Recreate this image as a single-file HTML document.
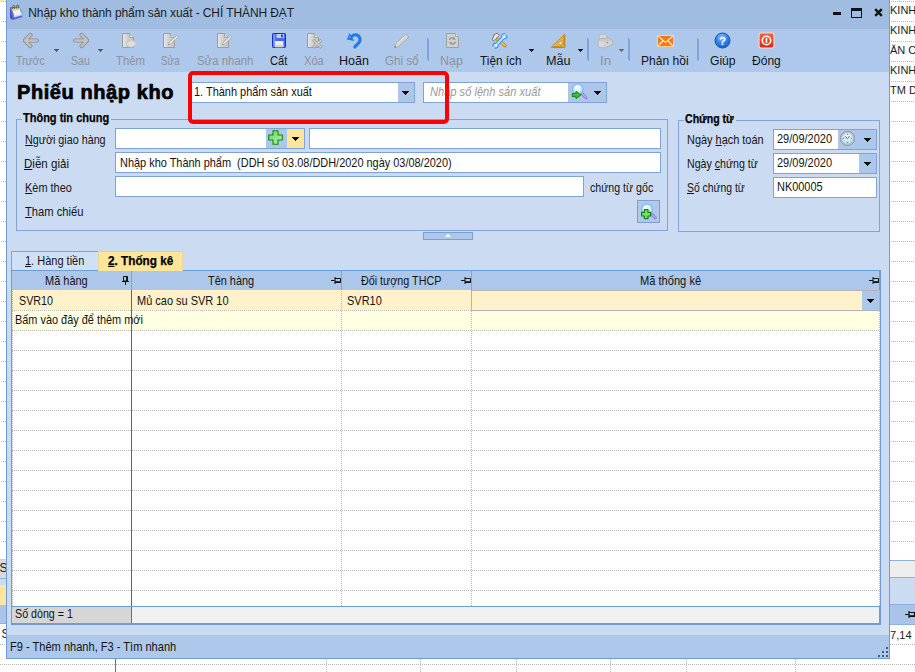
<!DOCTYPE html>
<html lang="vi"><head><meta charset="utf-8"><title>Nhập kho thành phẩm sản xuất</title>
<style>
html,body{margin:0;padding:0;}
body{width:915px;height:672px;position:relative;overflow:hidden;background:#fff;font-family:"Liberation Sans",sans-serif;}
div,span,svg{position:absolute;box-sizing:border-box;}
.t{white-space:pre;text-decoration:none;}
.t u{text-decoration:underline;text-underline-offset:1px;text-decoration-thickness:1px;}
.hd{height:1px;background:repeating-linear-gradient(90deg,#b9b9b9 0 1px,transparent 1px 2px);}
.vd{width:1px;background:repeating-linear-gradient(180deg,transparent 0 1px,#b9b9b9 1px 2px);}
.inp{background:#fff;border:1px solid #7fa3d6;}
.btn{background:#acc7e9;}
.arr{width:0;height:0;border-left:3.5px solid transparent;border-right:3.5px solid transparent;border-top:4px solid #0a0a0a;}
.sarr{width:0;height:0;border-left:3px solid transparent;border-right:3px solid transparent;border-top:3px solid #555;}
.sep{width:2px;background:linear-gradient(90deg,#86a9da 0 1px,#c4d7f0 1px 2px);}
.bgt{font-size:11px;line-height:14px;color:#1c1c1c;white-space:pre;}

</style></head><body>
<div class="hd" style="left:1px;top:1px;width:5px"></div>
<div class="hd" style="left:891px;top:1px;width:24px"></div>
<div class="hd" style="left:1px;top:21px;width:5px"></div>
<div class="hd" style="left:891px;top:21px;width:24px"></div>
<div class="hd" style="left:1px;top:41px;width:5px"></div>
<div class="hd" style="left:891px;top:41px;width:24px"></div>
<div class="hd" style="left:1px;top:61px;width:5px"></div>
<div class="hd" style="left:891px;top:61px;width:24px"></div>
<div class="hd" style="left:1px;top:81px;width:5px"></div>
<div class="hd" style="left:891px;top:81px;width:24px"></div>
<div class="hd" style="left:1px;top:101px;width:5px"></div>
<div class="hd" style="left:891px;top:101px;width:24px"></div>
<div class="hd" style="left:1px;top:121px;width:5px"></div>
<div class="hd" style="left:891px;top:121px;width:24px"></div>
<div class="hd" style="left:1px;top:141px;width:5px"></div>
<div class="hd" style="left:891px;top:141px;width:24px"></div>
<div class="hd" style="left:1px;top:161px;width:5px"></div>
<div class="hd" style="left:891px;top:161px;width:24px"></div>
<div class="hd" style="left:1px;top:181px;width:5px"></div>
<div class="hd" style="left:891px;top:181px;width:24px"></div>
<div class="hd" style="left:1px;top:201px;width:5px"></div>
<div class="hd" style="left:891px;top:201px;width:24px"></div>
<div class="hd" style="left:1px;top:221px;width:5px"></div>
<div class="hd" style="left:891px;top:221px;width:24px"></div>
<div class="hd" style="left:1px;top:241px;width:5px"></div>
<div class="hd" style="left:891px;top:241px;width:24px"></div>
<div class="hd" style="left:1px;top:261px;width:5px"></div>
<div class="hd" style="left:891px;top:261px;width:24px"></div>
<div class="hd" style="left:1px;top:281px;width:5px"></div>
<div class="hd" style="left:891px;top:281px;width:24px"></div>
<div class="hd" style="left:1px;top:301px;width:5px"></div>
<div class="hd" style="left:891px;top:301px;width:24px"></div>
<div class="hd" style="left:1px;top:321px;width:5px"></div>
<div class="hd" style="left:891px;top:321px;width:24px"></div>
<div class="hd" style="left:1px;top:341px;width:5px"></div>
<div class="hd" style="left:891px;top:341px;width:24px"></div>
<div class="hd" style="left:1px;top:361px;width:5px"></div>
<div class="hd" style="left:891px;top:361px;width:24px"></div>
<div class="hd" style="left:1px;top:381px;width:5px"></div>
<div class="hd" style="left:891px;top:381px;width:24px"></div>
<div class="hd" style="left:1px;top:401px;width:5px"></div>
<div class="hd" style="left:891px;top:401px;width:24px"></div>
<div class="hd" style="left:1px;top:421px;width:5px"></div>
<div class="hd" style="left:891px;top:421px;width:24px"></div>
<div class="hd" style="left:1px;top:441px;width:5px"></div>
<div class="hd" style="left:891px;top:441px;width:24px"></div>
<div class="hd" style="left:1px;top:461px;width:5px"></div>
<div class="hd" style="left:891px;top:461px;width:24px"></div>
<div class="hd" style="left:1px;top:481px;width:5px"></div>
<div class="hd" style="left:891px;top:481px;width:24px"></div>
<div class="hd" style="left:1px;top:501px;width:5px"></div>
<div class="hd" style="left:891px;top:501px;width:24px"></div>
<div class="hd" style="left:1px;top:521px;width:5px"></div>
<div class="hd" style="left:891px;top:521px;width:24px"></div>
<div class="hd" style="left:1px;top:541px;width:5px"></div>
<div class="hd" style="left:891px;top:541px;width:24px"></div>
<div style="left:0;top:0;width:5px;height:1px;background:#ffe9a6"></div>
<span class="bgt" style="left:890px;top:3px">KINH</span>
<span class="bgt" style="left:890px;top:23px">KINH</span>
<span class="bgt" style="left:890px;top:43px">ĂN C</span>
<span class="bgt" style="left:890px;top:63px">KINH</span>
<span class="bgt" style="left:890px;top:83px">TM D</span>
<div style="left:0;top:559px;width:6px;height:1px;background:#c5d3e6"></div>
<div style="left:0;top:560px;width:6px;height:18px;background:#dadada"></div>
<span class="bgt" style="left:-0.5px;top:561px;font-size:12px">S</span>
<div style="left:0;top:578px;width:6px;height:1px;background:#8db0de"></div>
<div style="left:0;top:579px;width:6px;height:6px;background:#cbdcf2"></div>
<div style="left:0;top:585px;width:6px;height:20px;background:#ffe69c"></div>
<div style="left:0;top:605px;width:6px;height:18px;background:#a9c4e8"></div>
<div style="left:0;top:623px;width:6px;height:1px;background:#8db0de"></div>
<span class="bgt" style="left:1.5px;top:627px;font-size:12px">S</span>
<div style="left:890px;top:560px;width:25px;height:1px;background:#8db0de"></div>
<div style="left:890px;top:561px;width:25px;height:16px;background:#eeeeee"></div>
<div style="left:890px;top:577px;width:25px;height:1px;background:#8db0de"></div>
<div style="left:890px;top:578px;width:25px;height:26px;background:#cbdcf2"></div>
<div style="left:890px;top:604px;width:25px;height:1px;background:#8db0de"></div>
<div style="left:890px;top:605px;width:25px;height:19px;background:#a9c4e8"></div>
<div style="left:890px;top:624px;width:25px;height:1px;background:#8db0de"></div>
<span class="bgt" style="left:884px;top:628px">57,14</span>
<svg style="left:905px;top:611px" width="10" height="8" viewBox="0 0 10 8"><path d="M0 3.5H4M4 0V7M4 1.5H9.5V5.5H4" fill="none" stroke="#111" stroke-width="1.2"/><path d="M4 5H9.5" stroke="#111" stroke-width="1.6"/></svg>
<div class="hd" style="left:0;top:644px;width:915px"></div>
<div class="hd" style="left:0;top:664px;width:915px"></div>
<div style="left:115px;top:655px;width:1px;height:17px;background:#6e6e6e"></div>
<div class="vd" style="left:326px;top:658px;height:14px"></div>
<div class="vd" style="left:420px;top:658px;height:14px"></div>
<div class="vd" style="left:516px;top:658px;height:14px"></div>
<div class="vd" style="left:610px;top:658px;height:14px"></div>
<div class="vd" style="left:686px;top:658px;height:14px"></div>
<div class="vd" style="left:795px;top:658px;height:14px"></div><div style="left:6px;top:0px;width:884px;height:659px;background:#6f9cd6;"></div>
<div style="left:7px;top:0px;width:882px;height:29px;background:#a0bde1;"></div>
<div style="left:7px;top:29px;width:882px;height:43px;background:#adc8ea;"></div>
<div style="left:7px;top:72px;width:882px;height:553px;background:#cbdcf2;"></div>
<div style="left:7px;top:625px;width:882px;height:10px;background:#cbdcf2;"></div>
<div style="left:7px;top:635px;width:882px;height:23px;background:#adc8ea;"></div>
<div style="left:833px;top:12px;width:8px;height:2.6px;background:#111;"></div>
<div style="left:851px;top:8px;width:11.4px;height:10.4px;border:1.2px solid #111;border-top-width:3px;"></div>
<svg style="left:874px;top:8px" width="9" height="9" viewBox="0 0 9 9"><path d="M1.2 1.2L7.8 7.8M7.8 1.2L1.2 7.8" stroke="#111" stroke-width="2.4"/></svg>
<div style="left:886px;top:647px;width:2px;height:2px;background:#455d80;"></div>
<div style="left:882px;top:651px;width:2px;height:2px;background:#455d80;"></div>
<div style="left:886px;top:651px;width:2px;height:2px;background:#455d80;"></div>
<div style="left:878px;top:655px;width:2px;height:2px;background:#455d80;"></div>
<div style="left:882px;top:655px;width:2px;height:2px;background:#455d80;"></div>
<div style="left:886px;top:655px;width:2px;height:2px;background:#455d80;"></div>
<div style="left:427px;top:38px;width:1px;height:22px;background:#7aa5dd;"></div>
<div style="left:428px;top:39px;width:1px;height:22px;background:#7aa5dd;"></div>
<div style="left:587px;top:38px;width:1px;height:22px;background:#7aa5dd;"></div>
<div style="left:588px;top:39px;width:1px;height:22px;background:#7aa5dd;"></div>
<div style="left:628px;top:38px;width:1px;height:22px;background:#7aa5dd;"></div>
<div style="left:629px;top:39px;width:1px;height:22px;background:#7aa5dd;"></div>
<div style="left:697px;top:38px;width:1px;height:22px;background:#7aa5dd;"></div>
<div style="left:698px;top:39px;width:1px;height:22px;background:#7aa5dd;"></div>
<svg style="left:54px;top:49px" width="5" height="3" shape-rendering="crispEdges"><path d="M0 0h5v1h-5zM1 1h3v1h-3zM2 2h1v1h-1z" fill="#5a5a5a"/></svg>
<svg style="left:98px;top:49px" width="5" height="3" shape-rendering="crispEdges"><path d="M0 0h5v1h-5zM1 1h3v1h-3zM2 2h1v1h-1z" fill="#5a5a5a"/></svg>
<svg style="left:529px;top:49px" width="5" height="3" shape-rendering="crispEdges"><path d="M0 0h5v1h-5zM1 1h3v1h-3zM2 2h1v1h-1z" fill="#111"/></svg>
<svg style="left:578px;top:49px" width="5" height="3" shape-rendering="crispEdges"><path d="M0 0h5v1h-5zM1 1h3v1h-3zM2 2h1v1h-1z" fill="#111"/></svg>
<svg style="left:619px;top:49px" width="5" height="3" shape-rendering="crispEdges"><path d="M0 0h5v1h-5zM1 1h3v1h-3zM2 2h1v1h-1z" fill="#6a6a6a"/></svg>
<div class="inp" style="left:191px;top:82px;width:224px;height:21px;"></div>
<div style="left:398px;top:83px;width:16px;height:19px;background:#acc7e9;"></div>
<svg style="left:402px;top:91px" width="7" height="4" shape-rendering="crispEdges"><path d="M0 0h7v1h-7zM1 1h5v1h-5zM2 2h3v1h-3zM3 3h1v1h-1z" fill="#0a0a0a"/></svg>
<div class="inp" style="left:423px;top:82px;width:184px;height:21px;"></div>
<div style="left:568px;top:83px;width:38px;height:19px;background:#acc7e9;"></div>
<svg style="left:594px;top:91px" width="7" height="4" shape-rendering="crispEdges"><path d="M0 0h7v1h-7zM1 1h5v1h-5zM2 2h3v1h-3zM3 3h1v1h-1z" fill="#0a0a0a"/></svg>
<div style="left:16px;top:119px;width:652px;height:112px;border:1px solid #80a5d8;"></div>
<div style="left:22px;top:113px;width:89px;height:12px;background:#cbdcf2;"></div>
<div style="left:678px;top:120px;width:202px;height:112px;border:1px solid #80a5d8;"></div>
<div style="left:684px;top:114px;width:52px;height:12px;background:#cbdcf2;"></div>
<div class="inp" style="left:115px;top:128px;width:190px;height:21px;"></div>
<div style="left:266px;top:129px;width:21px;height:19px;background:#acc7e9;"></div>
<div style="left:287px;top:129px;width:17px;height:19px;background:#ffe59a;"></div>
<svg style="left:292px;top:137px" width="7" height="4" shape-rendering="crispEdges"><path d="M0 0h7v1h-7zM1 1h5v1h-5zM2 2h3v1h-3zM3 3h1v1h-1z" fill="#0a0a0a"/></svg>
<div class="inp" style="left:309px;top:128px;width:352px;height:21px;"></div>
<div class="inp" style="left:115px;top:152px;width:546px;height:21px;"></div>
<div class="inp" style="left:115px;top:176px;width:469px;height:21px;"></div>
<div style="left:637px;top:200px;width:23px;height:23px;background:#b0c9ea;border:1px solid #7a9fd0;"></div>
<div class="inp" style="left:773px;top:129px;width:104px;height:21px;"></div>
<div style="left:838px;top:130px;width:38px;height:19px;background:#acc7e9;"></div>
<svg style="left:864px;top:138px" width="7" height="4" shape-rendering="crispEdges"><path d="M0 0h7v1h-7zM1 1h5v1h-5zM2 2h3v1h-3zM3 3h1v1h-1z" fill="#0a0a0a"/></svg>
<div class="inp" style="left:773px;top:153px;width:104px;height:21px;"></div>
<div style="left:859px;top:154px;width:17px;height:19px;background:#acc7e9;"></div>
<svg style="left:864px;top:162px" width="7" height="4" shape-rendering="crispEdges"><path d="M0 0h7v1h-7zM1 1h5v1h-5zM2 2h3v1h-3zM3 3h1v1h-1z" fill="#0a0a0a"/></svg>
<div class="inp" style="left:773px;top:177px;width:104px;height:21px;"></div>
<div style="left:423px;top:232px;width:50px;height:8px;background:#adc8ea;border:1px solid #7a9fd0;"></div>
<div style="left:444.5px;top:234px;width:0;height:0;border-left:3px solid transparent;border-right:3px solid transparent;border-bottom:3px solid #fff;"></div>
<div style="left:11px;top:251px;width:87px;height:19px;background:#d1e1f5;border-top:1px solid #7ba3dc;border-left:1px solid #7ba3dc;"></div>
<div style="left:11px;top:270px;width:870px;height:355px;background:#6f9cd6;"></div>
<div style="left:98px;top:251px;width:85px;height:20px;background:#ffe59a;border-top:1px solid #e9d28e;border-left:1px solid #ecd79a;border-right:1px solid #ecd79a;"></div>
<div style="left:12px;top:271px;width:867px;height:19px;background:#acc7e9;"></div>
<div style="left:12px;top:290px;width:868px;height:20px;background:#fff1c9;"></div>
<div style="left:12px;top:310px;width:868px;height:20px;background:#ffffe1;"></div>
<div style="left:12px;top:330px;width:868px;height:276px;background:#fff;"></div>
<div style="left:131px;top:271px;width:1px;height:19px;background:#7fa3d6;"></div>
<div style="left:341px;top:271px;width:1px;height:19px;background:#7fa3d6;"></div>
<div style="left:471px;top:271px;width:1px;height:19px;background:#7fa3d6;"></div>
<div class="hd" style="left:12px;top:310px;width:868px;height:1px;"></div>
<div class="hd" style="left:12px;top:330px;width:868px;height:1px;"></div>
<div class="hd" style="left:12px;top:350px;width:868px;height:1px;"></div>
<div class="hd" style="left:12px;top:370px;width:868px;height:1px;"></div>
<div class="hd" style="left:12px;top:390px;width:868px;height:1px;"></div>
<div class="hd" style="left:12px;top:410px;width:868px;height:1px;"></div>
<div class="hd" style="left:12px;top:430px;width:868px;height:1px;"></div>
<div class="hd" style="left:12px;top:450px;width:868px;height:1px;"></div>
<div class="hd" style="left:12px;top:470px;width:868px;height:1px;"></div>
<div class="hd" style="left:12px;top:490px;width:868px;height:1px;"></div>
<div class="hd" style="left:12px;top:510px;width:868px;height:1px;"></div>
<div class="hd" style="left:12px;top:530px;width:868px;height:1px;"></div>
<div class="hd" style="left:12px;top:550px;width:868px;height:1px;"></div>
<div class="hd" style="left:12px;top:570px;width:868px;height:1px;"></div>
<div class="hd" style="left:12px;top:590px;width:868px;height:1px;"></div>
<div style="left:131px;top:290px;width:1px;height:316px;background:#646464;"></div>
<div class="vd" style="left:341px;top:290px;width:1px;height:316px;"></div>
<div class="vd" style="left:471px;top:290px;width:1px;height:316px;"></div>
<div class="vd" style="left:12px;top:290px;width:1px;height:316px;"></div>
<div class="vd" style="left:879px;top:310px;width:1px;height:296px;"></div>
<div style="left:471px;top:290px;width:409px;height:21px;border:1px solid #b4b4b4;"></div>
<div style="left:862px;top:291px;width:17px;height:19px;background:#acc7e9;"></div>
<svg style="left:867px;top:299px" width="7" height="4" shape-rendering="crispEdges"><path d="M0 0h7v1h-7zM1 1h5v1h-5zM2 2h3v1h-3zM3 3h1v1h-1z" fill="#0a0a0a"/></svg>
<div style="left:12px;top:606px;width:868px;height:1px;background:#6f9cd6;"></div>
<div style="left:12px;top:607px;width:119px;height:16px;background:#d6d6d6;"></div>
<div style="left:131px;top:607px;width:1px;height:16px;background:#6e6e6e;"></div>
<div style="left:132px;top:607px;width:747px;height:16px;background:#f0f0f0;"></div>
<svg style="left:122px;top:276px" width="7" height="9" viewBox="0 0 7 9"><path d="M1.5 0.5H5.5V5H1.5ZM0 5.5H7M3.5 5.5V9" fill="none" stroke="#111" stroke-width="1"/><path d="M4.8 0.5V5" stroke="#111" stroke-width="1.4"/></svg>
<svg style="left:331px;top:277px" width="10" height="8" viewBox="0 0 10 8"><path d="M0 3.5H4M4 0V7M4 1.5H9.5V5.5H4" fill="none" stroke="#111" stroke-width="1"/><path d="M4 5H9.5" stroke="#111" stroke-width="1.6"/></svg>
<svg style="left:461px;top:277px" width="10" height="8" viewBox="0 0 10 8"><path d="M0 3.5H4M4 0V7M4 1.5H9.5V5.5H4" fill="none" stroke="#111" stroke-width="1"/><path d="M4 5H9.5" stroke="#111" stroke-width="1.6"/></svg>
<svg style="left:868.5px;top:277px" width="10" height="8" viewBox="0 0 10 8"><path d="M0 3.5H4M4 0V7M4 1.5H9.5V5.5H4" fill="none" stroke="#111" stroke-width="1"/><path d="M4 5H9.5" stroke="#111" stroke-width="1.6"/></svg><svg style="left:9px;top:4px" width="16" height="17" viewBox="0 0 16 17">
<path d="M1 3.3L9.5 2.6L13.5 13L3.6 16L1 14Z" fill="#6a5cd6"/>
<path d="M1 3.3L3.6 16L1 14Z" fill="#5a4cc0"/>
<path d="M2.6 4.4L10.4 3.4L13.8 11L5 13.2Z" fill="#eaf3ff" stroke="#3b8de6" stroke-width="0.9"/>
<path d="M2.6 4.4L10.4 3.4L11.3 5.6L3.5 7.2Z" fill="#ffd64a"/>
<path d="M5 11.5L13 9.4L13.8 11L5 13.2Z" fill="#cfe1fb"/>
<path d="M3.6 5V2.6a1 1.3 0 0 1 2 0V5M7.6 4.6V2.3a1 1.3 0 0 1 2 0V4.4" fill="none" stroke="#5f6570" stroke-width="1"/>
</svg>
<svg style="left:22.5px;top:32px" width="16" height="17" viewBox="0 0 16 17"><g transform=""><path d="M7.4 2.9L1.9 8.5L7.4 14.1M2.4 8.5H13.8" fill="none" stroke="#8d8d8d" stroke-width="4.2" stroke-linecap="round" stroke-linejoin="round"/>
<path d="M7.4 2.9L1.9 8.5L7.4 14.1M2.4 8.5H13.8" fill="none" stroke="#c2c2c2" stroke-width="2.4" stroke-linecap="round" stroke-linejoin="round"/></g></svg>
<svg style="left:72.5px;top:32px" width="16" height="17" viewBox="0 0 16 17"><g transform="translate(16 0) scale(-1 1)"><path d="M7.4 2.9L1.9 8.5L7.4 14.1M2.4 8.5H13.8" fill="none" stroke="#8d8d8d" stroke-width="4.2" stroke-linecap="round" stroke-linejoin="round"/>
<path d="M7.4 2.9L1.9 8.5L7.4 14.1M2.4 8.5H13.8" fill="none" stroke="#c2c2c2" stroke-width="2.4" stroke-linecap="round" stroke-linejoin="round"/></g></svg>
<svg style="left:122px;top:33px" width="16" height="16" viewBox="0 0 16 16"><defs><linearGradient id="pgr" x1="0" y1="0" x2="1" y2="0"><stop offset="0" stop-color="#e6e6e6"/><stop offset="0.5" stop-color="#cfcfcf"/><stop offset="1" stop-color="#c4c4c4"/></linearGradient></defs>
<path d="M0.5 0.5H7.5L11.5 4.5V14.5H0.5Z" fill="url(#pgr)" stroke="#9d9d9d" stroke-width="1"/>
<path d="M7.5 0.5V4.5H11.5" fill="#dcdcdc" stroke="#9d9d9d" stroke-width="0.8"/>
<path d="M9.3 7.0L10.6 8.1L12.6 7.7L12.8 9.2L14.6 9.7L13.6 10.9L14.6 12.1L12.8 12.6L12.6 14.1L10.6 13.7L9.3 14.8L8.0 13.7L6.0 14.1L5.8 12.6L4.0 12.1L5.0 10.9L4.0 9.7L5.8 9.2L6.0 7.7L8.0 8.1Z" fill="#dedede" stroke="#bcbcbc" stroke-width="0.7" stroke-linejoin="round"/></svg>
<svg style="left:163px;top:33px" width="16" height="15" viewBox="0 0 16 15"><defs><linearGradient id="pgr" x1="0" y1="0" x2="1" y2="0"><stop offset="0" stop-color="#e6e6e6"/><stop offset="0.5" stop-color="#cfcfcf"/><stop offset="1" stop-color="#c4c4c4"/></linearGradient></defs>
<path d="M0.5 0.5H7.5L11.5 4.5V14.5H0.5Z" fill="url(#pgr)" stroke="#9d9d9d" stroke-width="1"/>
<path d="M7.5 0.5V4.5H11.5" fill="#dcdcdc" stroke="#9d9d9d" stroke-width="0.8"/>
<path d="M5.3 11.8L6.2 9.2L13.6 2.4L15.2 4L7.9 10.9Z" fill="#e2e2e2" stroke="#a8a8a8" stroke-width="0.8"/>
<path d="M5.3 11.8L6.3 11.4L5.7 10.8Z" fill="#555"/></svg>
<svg style="left:217px;top:33px" width="16" height="15" viewBox="0 0 16 15"><defs><linearGradient id="pgr" x1="0" y1="0" x2="1" y2="0"><stop offset="0" stop-color="#e6e6e6"/><stop offset="0.5" stop-color="#cfcfcf"/><stop offset="1" stop-color="#c4c4c4"/></linearGradient></defs>
<path d="M0.5 0.5H7.5L11.5 4.5V14.5H0.5Z" fill="url(#pgr)" stroke="#9d9d9d" stroke-width="1"/>
<path d="M7.5 0.5V4.5H11.5" fill="#dcdcdc" stroke="#9d9d9d" stroke-width="0.8"/>
<path d="M5.3 11.8L6.2 9.2L13.6 2.4L15.2 4L7.9 10.9Z" fill="#e2e2e2" stroke="#a8a8a8" stroke-width="0.8"/>
<path d="M5.3 11.8L6.3 11.4L5.7 10.8Z" fill="#555"/></svg>
<svg style="left:272px;top:33px" width="14" height="15" viewBox="0 0 14 15">
<rect x="0.5" y="0.5" width="13" height="14" rx="0.8" fill="#4468f2" stroke="#1b2fd0" stroke-width="1"/>
<rect x="1.2" y="1.2" width="2" height="12.6" fill="#7d97fb"/>
<rect x="4.5" y="1" width="7.5" height="4" fill="#c9cdd8"/>
<rect x="9" y="1.6" width="2" height="2.6" fill="#2b47e0"/>
<rect x="3" y="8" width="8.4" height="6.2" fill="#ededed"/>
<rect x="3" y="12" width="8.4" height="2.2" fill="#d4d4d4"/>
</svg>
<svg style="left:307px;top:33px" width="16" height="16" viewBox="0 0 16 16"><defs><linearGradient id="pgr" x1="0" y1="0" x2="1" y2="0"><stop offset="0" stop-color="#e6e6e6"/><stop offset="0.5" stop-color="#cfcfcf"/><stop offset="1" stop-color="#c4c4c4"/></linearGradient></defs>
<path d="M0.5 0.5H7.5L11.5 4.5V14.5H0.5Z" fill="url(#pgr)" stroke="#9d9d9d" stroke-width="1"/>
<path d="M7.5 0.5V4.5H11.5" fill="#dcdcdc" stroke="#9d9d9d" stroke-width="0.8"/>
<path d="M6.2 6.8L14.6 14.6M14.6 6.8L6.2 14.6" stroke="#a2a2a2" stroke-width="3.2" stroke-linecap="butt"/>
<path d="M6.6 7.2L14.2 14.2M14.2 7.2L6.6 14.2" stroke="#d0d0d0" stroke-width="1.4"/></svg>
<svg style="left:346px;top:32px" width="16" height="17" viewBox="0 0 16 17">
<path d="M8.9 14.9L12.7 10.9C15.4 8 13.6 2.8 9.4 2.8C8 2.8 7 3.3 5.8 4.4" fill="none" stroke="#1f7be8" stroke-width="3.1" stroke-linecap="round"/>
<path d="M0.8 7.6L3.5 1L8.3 8.9Z" fill="#1f7be8"/>
<path d="M2.2 6.6L3.7 3L5 5.4Z" fill="#4a9af4"/>
</svg>
<svg style="left:393px;top:33px" width="17" height="16" viewBox="0 0 17 16">
<path d="M1.4 14.8L2.4 11L12.8 0.9L15.9 4L5.2 13.9Z" fill="#d4d4d4" stroke="#a6a6a6" stroke-width="0.9" stroke-linejoin="round"/>
<path d="M1.6 14.6L3.2 14.1L2.1 13Z" fill="#666"/>
<path d="M3.4 11.4L13 2.2" stroke="#e6e6e6" stroke-width="1"/>
</svg>
<svg style="left:446px;top:33px" width="14" height="15" viewBox="0 0 14 15">
<path d="M0.5 0.5H9.5L12.5 3.5V14.5H0.5Z" fill="#d0d0d0" stroke="#a0a0a0"/>
<path d="M9.5 0.5V3.5H12.5" fill="#e6e6e6" stroke="#a0a0a0" stroke-width="0.8"/>
<path d="M3.4 6.8A3 2.6 0 0 1 8.6 5.6M9.4 8.6A3 2.6 0 0 1 4 10" fill="none" stroke="#9a9a9a" stroke-width="1.5"/>
<path d="M7.4 4.2L10 6.6L6.8 7Z M5.6 11.6L2.8 9.2L6 8.8Z" fill="#9a9a9a"/>
</svg>
<svg style="left:491px;top:32px" width="17" height="17" viewBox="0 0 17 17">
<path d="M6.2 7.2L14 13.6" stroke="#c98a22" stroke-width="3.4" stroke-linecap="round"/>
<path d="M6.2 7.2L14 13.6" stroke="#f2cf48" stroke-width="1.4" stroke-linecap="round"/>
<path d="M1.2 7.6L3.1 3L5.9 1.1L8.6 3.2L5 6.6L2.9 8.9Z" fill="#e9e9e9" stroke="#6a6a6a" stroke-width="0.9" stroke-linejoin="round"/>
<path d="M2.3 3.4L3.4 2.4" stroke="#d08a30" stroke-width="1.2"/>
<path d="M4.8 13.4L13.2 4.6" stroke="#2f8fee" stroke-width="3.6"/>
<circle cx="13.2" cy="4.2" r="2.5" fill="#d6efff" stroke="#2f8fee" stroke-width="1.1"/>
<circle cx="4.6" cy="13.6" r="2.5" fill="#d6efff" stroke="#2f8fee" stroke-width="1.1"/>
<path d="M4.8 13.4L13.2 4.6" stroke="#d6efff" stroke-width="1.6"/>
<path d="M13.6 3.8L16.2 1" stroke="#adc8ea" stroke-width="2"/>
<path d="M4.2 14L1.4 16.8" stroke="#adc8ea" stroke-width="2"/>
</svg>
<svg style="left:550px;top:33px" width="16" height="16" viewBox="0 0 16 16">
<path d="M1 14.6H14.8V1.2Z" fill="#f3b63e" stroke="#c48718" stroke-width="1" stroke-linejoin="round"/>
<path d="M7 11.8H12V6.8Z" fill="#d6e2f4" stroke="#c48718" stroke-width="0.7"/>
<path d="M4 14.4V13M6 14.4V13M8 14.4V13M10 14.4V13M12 14.4V13M14.6 12H13.2M14.6 10H13.2M14.6 8H13.2M14.6 6H13.2M14.6 4H13.2" stroke="#8a5a08" stroke-width="0.7"/>
</svg>
<svg style="left:597px;top:33px" width="17" height="16" viewBox="0 0 17 16">
<path d="M2.1 1.9L8.8 1.1L10.1 5.2L2.9 5.9Z" fill="#d8d8d8" stroke="#b6b6b6" stroke-width="0.7"/>
<path d="M1.1 7.6L3.6 5.7L12 5L15.6 7.2L16 11.4L12.4 12.7L7.5 14.9L2.5 14.4L1.1 13Z" fill="#c9c9c9" stroke="#b0b0b0" stroke-width="0.8" stroke-linejoin="round"/>
<path d="M1.7 8L6.8 8.7L7.2 14.3L2.7 13.9L1.7 12.8Z" fill="#d9d9d9"/>
<path d="M7.6 8.6L14.8 7.4L15.2 11.2L7.9 14Z" fill="#d2d2d2"/>
<circle cx="10.4" cy="9.5" r="0.75" fill="#8a8a8a"/>
</svg>
<svg style="left:657px;top:35px" width="17" height="12" viewBox="0 0 17 12">
<rect x="0.5" y="0.5" width="16" height="11" fill="#f57a12" stroke="#ffd0a0" stroke-width="1"/>
<path d="M1.4 1.4L8.5 7.4L15.6 1.4M1.4 10.6L6.2 5.6M15.6 10.6L10.8 5.6" fill="none" stroke="#fff" stroke-width="1.1"/>
</svg>
<svg style="left:714px;top:32px" width="17" height="17" viewBox="0 0 17 17">
<defs><radialGradient id="hg" cx="0.45" cy="0.3" r="0.75"><stop offset="0" stop-color="#8cc4ff"/><stop offset="0.55" stop-color="#2f80ea"/><stop offset="1" stop-color="#1858c4"/></radialGradient></defs>
<circle cx="8.5" cy="8.5" r="7.5" fill="url(#hg)" stroke="#1a4fb4" stroke-width="1"/>
<text x="8.5" y="12.6" text-anchor="middle" font-family="Liberation Sans, sans-serif" font-weight="700" font-size="11.5" fill="#fff">?</text>
</svg>
<svg style="left:758px;top:32px" width="17" height="17" viewBox="0 0 17 17">
<defs><linearGradient id="cg" x1="0" y1="0" x2="0" y2="1"><stop offset="0" stop-color="#f4633a"/><stop offset="1" stop-color="#d92c10"/></linearGradient></defs>
<rect x="0.6" y="0.6" width="15.8" height="15.8" rx="2" fill="#fbd9cc"/>
<rect x="1.6" y="1.6" width="13.8" height="13.8" rx="1.4" fill="url(#cg)"/>
<circle cx="8.5" cy="8.5" r="4.2" fill="none" stroke="#fff" stroke-width="1.6"/>
<rect x="7.7" y="6" width="1.6" height="5" fill="#fff"/>
</svg>
<svg style="left:268px;top:130px" width="15" height="15" viewBox="0 0 15 15"><defs><linearGradient id="pg268" x1="0" y1="0" x2="1" y2="1"><stop offset="0" stop-color="#6ed66a"/><stop offset="1" stop-color="#b4f2aa"/></linearGradient></defs>
<path d="M5.0 0.7H10.0V5.0H14.3V10.0H10.0V14.3H5.0V10.0H0.7V5.0H5.0Z" fill="url(#pg268)" stroke="#0f8a0f" stroke-width="1.1" stroke-linejoin="round"/></svg>
<svg style="left:570px;top:82px" width="19" height="19" viewBox="0 0 19 19">
<defs><radialGradient id="lg" cx="0.4" cy="0.3" r="0.8"><stop offset="0" stop-color="#ffffff"/><stop offset="1" stop-color="#b4dcf6"/></radialGradient></defs>
<path d="M12 11.6L16 15.8" stroke="#8f78e0" stroke-width="3" stroke-linecap="round"/>
<path d="M12.4 12L16 15.6" stroke="#c0b0f4" stroke-width="1.2" stroke-linecap="round"/>
<circle cx="7.8" cy="7.1" r="5.1" fill="url(#lg)" stroke="#84c2f2" stroke-width="1.5"/>
<path d="M2.2 11.4H6V9.2L11 13L6 16.6V14.6H2.2Z" fill="#3cc030" stroke="#118c10" stroke-width="1" stroke-linejoin="round"/>
</svg>
<svg style="left:639px;top:202px" width="19" height="19" viewBox="0 0 19 19">
<defs><radialGradient id="lg2" cx="0.4" cy="0.3" r="0.8"><stop offset="0" stop-color="#ffffff"/><stop offset="1" stop-color="#b4dcf6"/></radialGradient></defs>
<path d="M12.6 11.8L16.2 15.8" stroke="#8f78e0" stroke-width="3" stroke-linecap="round"/>
<path d="M13 12.2L16.2 15.6" stroke="#c0b0f4" stroke-width="1.2" stroke-linecap="round"/>
<circle cx="8" cy="7.3" r="5.3" fill="url(#lg2)" stroke="#84c2f2" stroke-width="1.5"/>
<path d="M5.4 7.6H9V10.4H11.6V14H9V16.6H5.4V14H2.6V10.4H5.4Z" fill="#7bdc70" stroke="#0c8a0c" stroke-width="1.2" stroke-linejoin="round"/>
</svg>
<svg style="left:839px;top:130px" width="17" height="17" viewBox="0 0 17 17">
<defs><radialGradient id="ck" cx="0.5" cy="0.35" r="0.7"><stop offset="0" stop-color="#eefaff"/><stop offset="1" stop-color="#a8daf4"/></radialGradient></defs>
<circle cx="8.5" cy="8.4" r="7.2" fill="#bcbcbc" stroke="#989898" stroke-width="0.9"/>
<circle cx="8.5" cy="8.4" r="5.6" fill="url(#ck)"/>
<circle cx="8.5" cy="4.3" r="0.7" fill="#f06a20"/><circle cx="8.5" cy="12.5" r="0.7" fill="#f06a20"/>
<circle cx="4.4" cy="8.4" r="0.7" fill="#f06a20"/><circle cx="12.6" cy="8.4" r="0.7" fill="#f06a20"/>
<path d="M6 6.4L8.5 8.6L10.6 6.2" fill="none" stroke="#555" stroke-width="0.9"/>
</svg>
<div id="texts">
<span class="t" id="t0" style="left:28.31px;top:5.14px;font-size:12px;line-height:16px;letter-spacing:-0.095px;color:#1c1c1c;">Nhập kho thành phẩm sản xuất - CHÍ THÀNH ĐẠT</span>
<span class="t" id="t1" style="left:16.43px;top:52.67px;font-size:12.5px;line-height:16px;letter-spacing:0.000px;color:#8e9299;transform:scaleX(0.8416);transform-origin:0 0;">Trước</span>
<span class="t" id="t2" style="left:71.37px;top:52.67px;font-size:12.5px;line-height:16px;letter-spacing:0.000px;color:#8e9299;transform:scaleX(0.8507);transform-origin:0 0;">Sau</span>
<span class="t" id="t3" style="left:116.40px;top:52.67px;font-size:12.5px;line-height:16px;letter-spacing:0.000px;color:#8e9299;transform:scaleX(0.9032);transform-origin:0 0;">Thêm</span>
<span class="t" id="t4" style="left:160.76px;top:52.67px;font-size:12.5px;line-height:16px;letter-spacing:0.000px;color:#8e9299;transform:scaleX(0.7893);transform-origin:0 0;">Sửa</span>
<span class="t" id="t5" style="left:197.37px;top:52.67px;font-size:12.5px;line-height:16px;letter-spacing:0.000px;color:#8e9299;transform:scaleX(0.9116);transform-origin:0 0;">Sửa nhanh</span>
<span class="t" id="t6" style="left:269.59px;top:52.67px;font-size:12.5px;line-height:16px;letter-spacing:0.000px;color:#141414;transform:scaleX(0.8856);transform-origin:0 0;">Cất</span>
<span class="t" id="t7" style="left:303.60px;top:52.67px;font-size:12.5px;line-height:16px;letter-spacing:0.000px;color:#8e9299;transform:scaleX(0.8864);transform-origin:0 0;">Xóa</span>
<span class="t" id="t8" style="left:339.41px;top:52.67px;font-size:12.5px;line-height:16px;letter-spacing:0.000px;color:#141414;transform:scaleX(1.0001);transform-origin:0 0;">Hoãn</span>
<span class="t" id="t9" style="left:385.18px;top:52.67px;font-size:12.5px;line-height:16px;letter-spacing:0.000px;color:#8e9299;transform:scaleX(0.9272);transform-origin:0 0;">Ghi sổ</span>
<span class="t" id="t10" style="left:440.42px;top:52.67px;font-size:12.5px;line-height:16px;letter-spacing:0.000px;color:#8e9299;transform:scaleX(0.9955);transform-origin:0 0;">Nạp</span>
<span class="t" id="t11" style="left:480.02px;top:52.67px;font-size:12.5px;line-height:16px;letter-spacing:0.000px;color:#141414;transform:scaleX(0.9431);transform-origin:0 0;">Tiện ích</span>
<span class="t" id="t12" style="left:545.59px;top:52.67px;font-size:12.5px;line-height:16px;letter-spacing:0.000px;color:#141414;transform:scaleX(1.0135);transform-origin:0 0;">Mẫu</span>
<span class="t" id="t13" style="left:600.25px;top:52.67px;font-size:12.5px;line-height:16px;letter-spacing:0.000px;color:#8e9299;transform:scaleX(1.0660);transform-origin:0 0;">In</span>
<span class="t" id="t14" style="left:641.42px;top:52.67px;font-size:12.5px;line-height:16px;letter-spacing:0.000px;color:#141414;transform:scaleX(0.9644);transform-origin:0 0;">Phản hồi</span>
<span class="t" id="t15" style="left:710.37px;top:52.67px;font-size:12.5px;line-height:16px;letter-spacing:0.000px;color:#141414;transform:scaleX(0.9685);transform-origin:0 0;">Giúp</span>
<span class="t" id="t16" style="left:752.19px;top:52.67px;font-size:12.5px;line-height:16px;letter-spacing:0.000px;color:#141414;transform:scaleX(0.9639);transform-origin:0 0;">Đóng</span>
<span class="t" id="t17" style="left:17.00px;top:78.67px;font-size:20px;line-height:26px;letter-spacing:0.577px;color:#000;font-weight:700;-webkit-text-stroke:0.7px #000;">Phiếu nhập kho</span>
<span class="t" id="t18" style="left:194.15px;top:84.07px;font-size:12.2px;line-height:16px;letter-spacing:0.000px;color:#141414;transform:scaleX(0.8983);transform-origin:0 0;">1. Thành phẩm sản xuất</span>
<span class="t" id="t19" style="left:429.59px;top:84.27px;font-size:12.2px;line-height:16px;letter-spacing:0.000px;color:#9a9a9a;font-style:italic;transform:scaleX(0.9109);transform-origin:0 0;">Nhập số lệnh sản xuất</span>
<span class="t" id="t20" style="left:23.00px;top:109.84px;font-size:12px;line-height:16px;letter-spacing:0.000px;color:#000;font-weight:700;-webkit-text-stroke:0.25px #000;transform:scaleX(0.9164);transform-origin:0 0;">Thông tin chung</span>
<span class="t" id="t21" style="left:24.57px;top:131.77px;font-size:12.2px;line-height:16px;letter-spacing:0.000px;color:#141414;transform:scaleX(0.8819);transform-origin:0 0;"><u>N</u>gười giao hàng</span>
<span class="t" id="t22" style="left:23.82px;top:155.77px;font-size:12.2px;line-height:16px;letter-spacing:0.000px;color:#141414;transform:scaleX(0.9476);transform-origin:0 0;"><u>D</u>iễn giải</span>
<span class="t" id="t23" style="left:24.57px;top:179.77px;font-size:12.2px;line-height:16px;letter-spacing:0.000px;color:#141414;transform:scaleX(0.8986);transform-origin:0 0;"><u>K</u>èm theo</span>
<span class="t" id="t24" style="left:25.02px;top:203.77px;font-size:12.2px;line-height:16px;letter-spacing:0.000px;color:#141414;transform:scaleX(0.9172);transform-origin:0 0;"><u>T</u>ham chiếu</span>
<span class="t" id="t25" style="left:120.34px;top:155.07px;font-size:12.2px;line-height:16px;letter-spacing:0.000px;color:#141414;transform:scaleX(0.8970);transform-origin:0 0;">Nhập kho Thành phẩm  (DDH số 03.08/DDH/2020 ngày 03/08/2020)</span>
<span class="t" id="t26" style="left:590.00px;top:179.77px;font-size:12.2px;line-height:16px;letter-spacing:0.000px;color:#141414;transform:scaleX(0.8711);transform-origin:0 0;">chứng từ gốc</span>
<span class="t" id="t27" style="left:684.98px;top:110.84px;font-size:12px;line-height:16px;letter-spacing:0.000px;color:#000;font-weight:700;-webkit-text-stroke:0.25px #000;transform:scaleX(0.8806);transform-origin:0 0;">Chứng từ</span>
<span class="t" id="t28" style="left:687.15px;top:132.37px;font-size:12.2px;line-height:16px;letter-spacing:0.000px;color:#141414;transform:scaleX(0.8967);transform-origin:0 0;">Ngày <u>h</u>ạch toán</span>
<span class="t" id="t29" style="left:687.15px;top:156.37px;font-size:12.2px;line-height:16px;letter-spacing:0.000px;color:#141414;transform:scaleX(0.8719);transform-origin:0 0;">Ngày <u>c</u>hứng từ</span>
<span class="t" id="t30" style="left:687.40px;top:180.37px;font-size:12.2px;line-height:16px;letter-spacing:0.000px;color:#141414;transform:scaleX(0.8515);transform-origin:0 0;"><u>S</u>ố chứng từ</span>
<span class="t" id="t31" style="left:776.56px;top:131.47px;font-size:12.2px;line-height:16px;letter-spacing:0.000px;color:#141414;transform:scaleX(0.9030);transform-origin:0 0;">29/09/2020</span>
<span class="t" id="t32" style="left:776.56px;top:155.47px;font-size:12.2px;line-height:16px;letter-spacing:0.000px;color:#141414;transform:scaleX(0.9030);transform-origin:0 0;">29/09/2020</span>
<span class="t" id="t33" style="left:777.20px;top:179.47px;font-size:12.2px;line-height:16px;letter-spacing:0.000px;color:#141414;transform:scaleX(0.8975);transform-origin:0 0;">NK00005</span>
<span class="t" id="t34" style="left:24.69px;top:252.97px;font-size:12.2px;line-height:16px;letter-spacing:0.000px;color:#141414;transform:scaleX(0.9031);transform-origin:0 0;"><u>1</u>. Hàng tiền</span>
<span class="t" id="t35" style="left:107.60px;top:252.64px;font-size:12px;line-height:16px;letter-spacing:0.000px;color:#000;font-weight:700;-webkit-text-stroke:0.25px #000;transform:scaleX(0.9789);transform-origin:0 0;"><u>2</u>. Thống kê</span>
<span class="t" id="t36" style="left:44.95px;top:272.77px;font-size:12.2px;line-height:16px;letter-spacing:0.000px;color:#141414;transform:scaleX(0.9001);transform-origin:0 0;">Mã hàng</span>
<span class="t" id="t37" style="left:208.43px;top:272.77px;font-size:12.2px;line-height:16px;letter-spacing:0.000px;color:#141414;transform:scaleX(0.8946);transform-origin:0 0;">Tên hàng</span>
<span class="t" id="t38" style="left:360.59px;top:272.77px;font-size:12.2px;line-height:16px;letter-spacing:0.000px;color:#141414;transform:scaleX(0.8818);transform-origin:0 0;">Đối tượng THCP</span>
<span class="t" id="t39" style="left:639.63px;top:272.77px;font-size:12.2px;line-height:16px;letter-spacing:0.000px;color:#141414;transform:scaleX(0.9110);transform-origin:0 0;">Mã thống kê</span>
<span class="t" id="t40" style="left:18.58px;top:292.77px;font-size:12.2px;line-height:16px;letter-spacing:0.000px;color:#141414;transform:scaleX(0.8787);transform-origin:0 0;">SVR10</span>
<span class="t" id="t41" style="left:137.34px;top:292.77px;font-size:12.2px;line-height:16px;letter-spacing:0.000px;color:#141414;transform:scaleX(0.9010);transform-origin:0 0;">Mủ cao su SVR 10</span>
<span class="t" id="t42" style="left:346.76px;top:292.77px;font-size:12.2px;line-height:16px;letter-spacing:0.000px;color:#141414;transform:scaleX(0.9001);transform-origin:0 0;">SVR10</span>
<span class="t" id="t43" style="left:14.57px;top:312.37px;font-size:12.2px;line-height:16px;letter-spacing:0.000px;color:#141414;transform:scaleX(0.8957);transform-origin:0 0;">Bấm vào đây để thêm mới</span>
<span class="t" id="t44" style="left:15.40px;top:606.47px;font-size:12.2px;line-height:16px;letter-spacing:0.000px;color:#141414;transform:scaleX(0.8769);transform-origin:0 0;">Số dòng = 1</span>
<span class="t" id="t45" style="left:10.40px;top:638.57px;font-size:12.2px;line-height:16px;letter-spacing:0.000px;color:#141414;transform:scaleX(0.9077);transform-origin:0 0;">F9 - Thêm nhanh, F3 - Tìm nhanh</span>
</div>
<div style="left:188px;top:71px;width:261px;height:53px;border:4px solid #ff0000;border-radius:5px;"></div>
</body></html>
